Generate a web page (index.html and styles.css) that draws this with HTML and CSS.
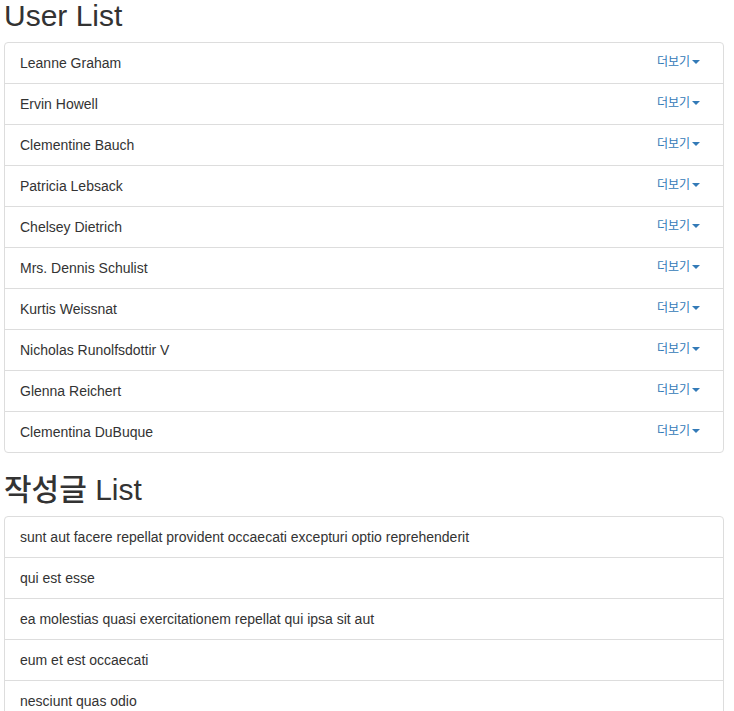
FILE: index.html
```html
<!DOCTYPE html>
<html lang="ko">
<head>
<meta charset="utf-8">
<title>User List</title>
<link rel="stylesheet" href="styles.css">
</head>
<body>
<div class="page">
  <h2 class="title title-first">User List</h2>
  <ul class="list-group">
    <li class="list-item"><span>Leanne Graham</span><a class="more">더보기<span class="caret"></span></a></li>
    <li class="list-item"><span>Ervin Howell</span><a class="more">더보기<span class="caret"></span></a></li>
    <li class="list-item"><span>Clementine Bauch</span><a class="more">더보기<span class="caret"></span></a></li>
    <li class="list-item"><span>Patricia Lebsack</span><a class="more">더보기<span class="caret"></span></a></li>
    <li class="list-item"><span>Chelsey Dietrich</span><a class="more">더보기<span class="caret"></span></a></li>
    <li class="list-item"><span>Mrs. Dennis Schulist</span><a class="more">더보기<span class="caret"></span></a></li>
    <li class="list-item"><span>Kurtis Weissnat</span><a class="more">더보기<span class="caret"></span></a></li>
    <li class="list-item"><span>Nicholas Runolfsdottir V</span><a class="more">더보기<span class="caret"></span></a></li>
    <li class="list-item"><span>Glenna Reichert</span><a class="more">더보기<span class="caret"></span></a></li>
    <li class="list-item"><span>Clementina DuBuque</span><a class="more">더보기<span class="caret"></span></a></li>
  </ul>
  <h2 class="title">작성글 List</h2>
  <ul class="list-group">
    <li class="list-item"><span>sunt aut facere repellat provident occaecati excepturi optio reprehenderit</span></li>
    <li class="list-item"><span>qui est esse</span></li>
    <li class="list-item"><span>ea molestias quasi exercitationem repellat qui ipsa sit aut</span></li>
    <li class="list-item"><span>eum et est occaecati</span></li>
    <li class="list-item"><span>nesciunt quas odio</span></li>
    <li class="list-item"><span>dolorem eum magni eos aperiam quia</span></li>
  </ul>
</div>
</body>
</html>
```
FILE: styles.css
```css
html, body {
  margin: 0;
  padding: 0;
}
body {
  font-family: "Liberation Sans", Arial, "Noto Sans CJK KR", sans-serif;
  font-size: 14px;
  line-height: 1.42857;
  color: #333;
  background: #fff;
}
.page {
  width: 720px;
  margin-left: 4px;
}
.title {
  font-size: 30px;
  font-weight: 500;
  line-height: 1.1;
  margin: 20px 0 10px;
  color: #333;
}
.title-first {
  margin-top: -1px;
}
.list-group {
  list-style: none;
  margin: 0 0 20px;
  padding: 0;
}
.list-item {
  display: flex;
  justify-content: space-between;
  align-items: center;
  padding: 11px 15px 9px;
  margin-bottom: -1px;
  border: 1px solid #ddd;
  background: #fff;
}
.list-item:first-child {
  border-top-left-radius: 4px;
  border-top-right-radius: 4px;
}
.list-item:last-child {
  border-bottom-left-radius: 4px;
  border-bottom-right-radius: 4px;
  margin-bottom: 0;
}
.more {
  font-size: 12px;
  line-height: 20px;
  color: #337ab7;
  margin-right: 8px;
  margin-top: -3px;
  display: flex;
  align-items: center;
}
.caret {
  display: inline-block;
  width: 0;
  height: 0;
  margin-left: 2px;
  border-top: 4px solid #337ab7;
  border-left: 4px solid transparent;
  border-right: 4px solid transparent;
}
```
